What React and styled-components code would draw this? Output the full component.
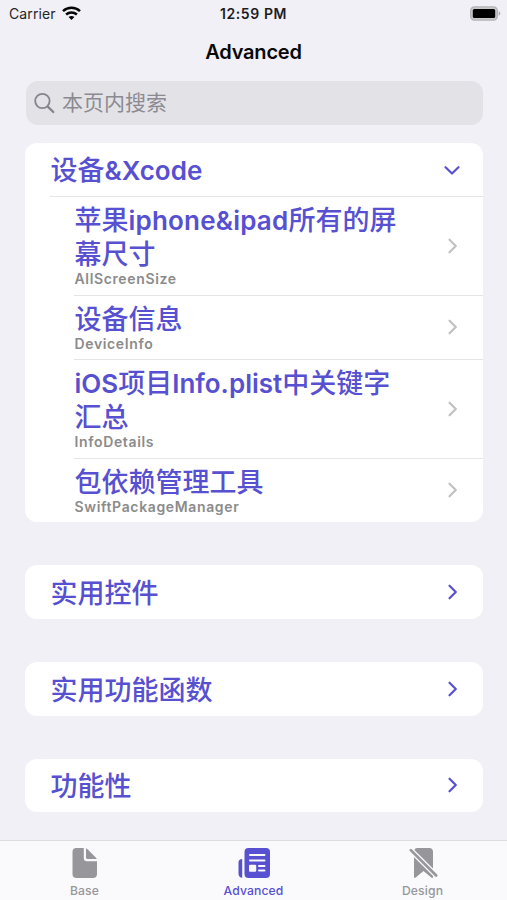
import React from 'react';
import styled, { createGlobalStyle } from 'styled-components';

const ACCENT = '#5750d0';

const GlobalStyle = createGlobalStyle`
  * { box-sizing: border-box; }
  body {
    margin: 0;
    background: #f1f0f6;
    font-family: Inter, "Noto Sans CJK SC", sans-serif;
    color: #08080a;
  }
`;

const Screen = styled.div`
  width: 507px;
  height: 900px;
  display: flex;
  flex-direction: column;
  overflow: hidden;
`;

const StatusBar = styled.header`
  height: 27px;
  flex: none;
  display: grid;
  grid-template-columns: 1fr auto 1fr;
  align-items: center;
  padding: 0 6px;
  font-size: 14px;
  line-height: 20px;
`;

const Carrier = styled.div`
  padding-left: 3px;
  display: flex;
  align-items: center;
  gap: 6px;
  letter-spacing: 0.1px;
  color: #252528;
`;

const Clock = styled.div`
  font-weight: 600;
  font-size: 14px;
  letter-spacing: 0.6px;
  color: #1c1c1f;
`;

const BatterySlot = styled.div`
  display: flex;
  justify-content: flex-end;
`;

const NavTitle = styled.h1`
  margin: 0;
  height: 53px;
  flex: none;
  padding-top: 12px;
  text-align: center;
  font-size: 20px;
  font-weight: 600;
  line-height: 26px;
  letter-spacing: -0.2px;
`;

const SearchField = styled.div`
  height: 44px;
  flex: none;
  margin: 0.5px 24.5px 0 25.5px;
  padding-left: 8.5px;
  border-radius: 12px;
  background: #e3e2e7;
  display: flex;
  align-items: center;
  gap: 7px;
  color: #8b8a91;
  font-size: 21px;
  line-height: 30px;
`;

const List = styled.main`
  flex: 1;
  min-height: 0;
  padding: 18px 24.5px 0 25px;
  display: flex;
  flex-direction: column;
  gap: 43px;
`;

const Card = styled.section`
  flex: none;
  background: #fff;
  border-radius: 12px;
`;

const CardHeader = styled.div`
  height: 53.7px;
  padding: 0 ${(p) => (p.$open ? 22 : 24)}px 0 25.5px;
  display: flex;
  align-items: center;
  justify-content: space-between;
`;

const Heading = styled.div`
  padding-top: ${(p) => (p.$card ? 4 : 0)}px;
  font-size: 27px;
  line-height: 34px;
  font-weight: 500;
  color: ${ACCENT};
  white-space: pre-line;
`;

const Latin = styled.span`
  font-size: 26px;
  font-weight: 600;
  letter-spacing: ${(p) => p.$spacing || 0}px;
`;

const Row = styled.div`
  margin-left: ${(p) => (p.$first ? 25 : 49)}px;
  padding: 6px 24px 6.2px ${(p) => (p.$first ? 24.5 : 0.5)}px;
  border-top: 1px solid #e5e5e8;
  display: flex;
  align-items: center;
  justify-content: space-between;
`;

const RowText = styled.div`
  padding-top: 1.2px;
`;

const Subtitle = styled.div`
  height: 17.3px;
  margin-top: -1.2px;
  font-size: 14px;
  line-height: 16px;
  font-weight: 600;
  letter-spacing: 0.64px;
  color: #8b8b8b;
`;

const TabBar = styled.nav`
  height: 60px;
  flex: none;
  border-top: 1px solid #dddce1;
  background: #fafafd;
  display: grid;
  grid-template-columns: repeat(3, 1fr);
`;

const Tab = styled.div`
  display: flex;
  flex-direction: column;
  align-items: center;
  padding-top: 5px;
  color: ${(p) => (p.$active ? ACCENT : '#97979b')};
`;

const TabLabel = styled.span`
  margin-top: 3px;
  font-size: 12.2px;
  font-weight: 500;
  line-height: 16px;
  letter-spacing: 0.12px;
`;

const Wifi = () => (
  <svg width="19" height="15" viewBox="0 0 19 15" fill="none" stroke="#050505" strokeWidth="2.5">
    <path d="M1 5.2C5.8.7 13.2.7 18 5.2" />
    <path d="M4.1 8.5c3.1-2.8 7.7-2.8 10.8 0" />
    <path d="M6.6 11.1c1.7-1.5 4.1-1.5 5.8 0L9.500 14z" fill="#050505" stroke="none" />
  </svg>
);

const Battery = () => (
  <svg width="31" height="15" viewBox="0 0 31 15">
    <rect x="0.7" y="0.9" width="26.6" height="13.2" rx="3.8" fill="#c9c9cc" stroke="#b3b3b5" strokeWidth="1.4" />
    <rect x="2.8" y="2.9" width="22.4" height="9.2" rx="1.6" fill="#000" />
    <path d="M28.7 5.3c2.1.8 2.1 3.6 0 4.4z" fill="#a9a9ac" />
  </svg>
);

const SearchIcon = () => (
  <svg width="21" height="22" viewBox="0 0 21 22" fill="none" stroke="#85848b" strokeLinecap="round">
    <circle cx="8.4" cy="9" r="7.2" strokeWidth="1.8" />
    <path d="M13.8 14.6 19.3 20" strokeWidth="2.3" />
  </svg>
);

const ChevronDown = () => (
  <svg width="18" height="16" viewBox="0 0 18 16" fill="none" stroke={ACCENT} strokeWidth="2.2" strokeLinecap="round" strokeLinejoin="round">
    <path d="M2.5 6.2 9 12.5l6.5-6.3" />
  </svg>
);

const ChevronRight = ({ color }) => (
  <svg width="12" height="18" viewBox="0 0 12 18" fill="none" stroke={color} strokeWidth="2.2" strokeLinecap="round" strokeLinejoin="round">
    <path d="M2.5 2.7 8.8 9l-6.3 6.3" />
  </svg>
);

const DocIcon = () => (
  <svg width="34" height="34" viewBox="0 0 34 34" fill="currentColor">
    <path d="M8.4 2h7.4v10.2c0 2 1 3 3 3H29v12.7c0 2.7-1.4 4.1-4.1 4.1H8.6c-2.7 0-4.1-1.4-4.1-4.1V6.1C4.5 3.4 5.7 2 8.4 2z" />
    <path d="M18 2.2c.7.2 1.2.6 1.8 1.2l7.7 7.9c.6.6 1 1.1 1.2 1.7h-9.3c-.9 0-1.4-.5-1.4-1.4z" />
  </svg>
);

const NewspaperIcon = () => (
  <svg width="34" height="34" viewBox="0 0 34 34">
    <rect x="7.5" y="2" width="25.5" height="30" rx="4" fill="currentColor" />
    <path d="M5.200 13v18.700C2.800 31.500 1.500 30.100 1.500 27.700V16.500c0-2.200 1.300-3.500 3.700-3.500z" fill="currentColor" />
    <g stroke="#fafafd" strokeWidth="2" strokeLinecap="round">
      <path d="M13 9h14.5M13 14.5h14.5M22 20h5.500M22 24.500h5.500" />
    </g>
    <rect x="12" y="18.700" width="7.200" height="7" rx="1" fill="#fafafd" />
  </svg>
);

const BookmarkSlashIcon = () => (
  <svg width="34" height="34" viewBox="0 0 34 34">
    <path d="M11.500 2h11.700c2.500 0 3.800 1.300 3.800 3.800v25c0 1.200-.9 1.500-1.700.8L17.500 25l-7.800 6.600c-.8.700-1.700.4-1.700-.8v-25C8 3.300 9.200 2 11.500 2z" fill="currentColor" />
    <path d="m2 1.300 31 31" stroke="#fafafd" strokeWidth="5.200" />
    <path d="m4.800 4.100 25.400 25.400" stroke="currentColor" strokeWidth="2.700" strokeLinecap="round" />
  </svg>
);

const entries = [
  {
    title: <>苹果<Latin $spacing={0.2}>iphone&amp;ipad</Latin>所有的屏{'\n'}幕尺寸</>,
    sub: 'AllScreenSize',
  },
  { title: '设备信息', sub: 'DeviceInfo' },
  {
    title: <><Latin>iOS</Latin>项目<Latin>Info.plist</Latin>中关键字{'\n'}汇总</>,
    sub: 'InfoDetails',
  },
  { title: '包依赖管理工具', sub: 'SwiftPackageManager' },
];

const collapsed = ['实用控件', '实用功能函数', '功能性'];

const tabs = [
  { label: 'Base', Icon: DocIcon },
  { label: 'Advanced', Icon: NewspaperIcon, active: true },
  { label: 'Design', Icon: BookmarkSlashIcon },
];

export default function App() {
  return (
    <Screen>
      <GlobalStyle />
      <StatusBar>
        <Carrier>Carrier <Wifi /></Carrier>
        <Clock>12:59 PM</Clock>
        <BatterySlot><Battery /></BatterySlot>
      </StatusBar>
      <NavTitle>Advanced</NavTitle>
      <SearchField><SearchIcon />本页内搜索</SearchField>
      <List>
        <Card>
          <CardHeader $open>
            <Heading $card>设备<Latin>&amp;Xcode</Latin></Heading>
            <ChevronDown />
          </CardHeader>
          {entries.map((entry, i) => (
            <Row key={entry.sub} $first={i === 0}>
              <RowText>
                <Heading>{entry.title}</Heading>
                <Subtitle>{entry.sub}</Subtitle>
              </RowText>
              <ChevronRight color="#c1c1c3" />
            </Row>
          ))}
        </Card>
        {collapsed.map((name) => (
          <Card key={name}>
            <CardHeader>
              <Heading $card>{name}</Heading>
              <ChevronRight color={ACCENT} />
            </CardHeader>
          </Card>
        ))}
      </List>
      <TabBar>
        {tabs.map(({ label, Icon, active }) => (
          <Tab key={label} $active={active}>
            <Icon />
            <TabLabel>{label}</TabLabel>
          </Tab>
        ))}
      </TabBar>
    </Screen>
  );
}
